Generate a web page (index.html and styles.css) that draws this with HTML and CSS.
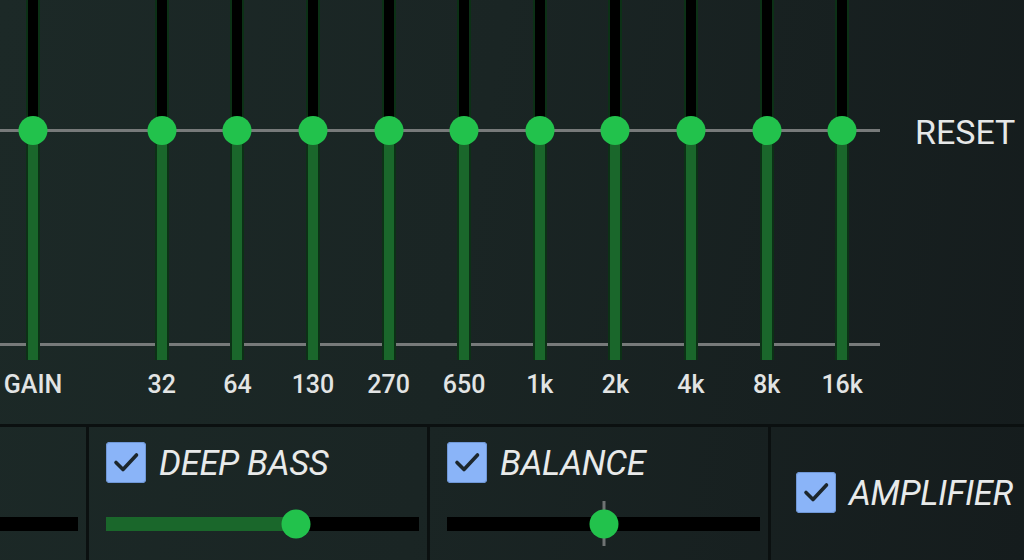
FILE: index.html
```html
<!DOCTYPE html>
<html lang="en">
<head>
    <meta charset="UTF-8">
    <meta name="viewport" content="width=device-width, initial-scale=1.0">
    <title>Equalizer</title>
    <link rel="stylesheet" href="styles.css">
</head>
<body>
    <div class="app">
        <section class="eq">
            <div class="bands">
                <div class="band gain">
                    <div class="track"><span class="knob"></span></div>
                    <span class="freq">GAIN</span>
                </div>
                <div class="band">
                    <div class="track"><span class="knob"></span></div>
                    <span class="freq">32</span>
                </div>
                <div class="band">
                    <div class="track"><span class="knob"></span></div>
                    <span class="freq">64</span>
                </div>
                <div class="band">
                    <div class="track"><span class="knob"></span></div>
                    <span class="freq">130</span>
                </div>
                <div class="band">
                    <div class="track"><span class="knob"></span></div>
                    <span class="freq">270</span>
                </div>
                <div class="band">
                    <div class="track"><span class="knob"></span></div>
                    <span class="freq">650</span>
                </div>
                <div class="band">
                    <div class="track"><span class="knob"></span></div>
                    <span class="freq">1k</span>
                </div>
                <div class="band">
                    <div class="track"><span class="knob"></span></div>
                    <span class="freq">2k</span>
                </div>
                <div class="band">
                    <div class="track"><span class="knob"></span></div>
                    <span class="freq">4k</span>
                </div>
                <div class="band">
                    <div class="track"><span class="knob"></span></div>
                    <span class="freq">8k</span>
                </div>
                <div class="band">
                    <div class="track"><span class="knob"></span></div>
                    <span class="freq">16k</span>
                </div>
            </div>
            <div class="side">
                <button class="reset" type="button">RESET</button>
            </div>
        </section>

        <section class="effects">
            <div class="panel cut">
                <div class="slider"></div>
            </div>

            <div class="panel">
                <label class="toggle">
                    <span class="check">
                        <svg viewBox="0 0 40 40"><polyline points="10,20.5 17,27.5 30.5,13"/></svg>
                    </span>
                    <span class="title">DEEP BASS</span>
                </label>
                <div class="slider">
                    <div class="fill" style="width: 60.6%"></div>
                    <span class="knob" style="left: 60.6%"></span>
                </div>
            </div>

            <div class="panel">
                <label class="toggle">
                    <span class="check">
                        <svg viewBox="0 0 40 40"><polyline points="10,20.5 17,27.5 30.5,13"/></svg>
                    </span>
                    <span class="title">BALANCE</span>
                </label>
                <div class="slider centered">
                    <span class="tick"></span>
                    <span class="knob" style="left: 50%"></span>
                </div>
            </div>

            <div class="panel solo">
                <label class="toggle">
                    <span class="check">
                        <svg viewBox="0 0 40 40"><polyline points="10,20.5 17,27.5 30.5,13"/></svg>
                    </span>
                    <span class="title">AMPLIFIER</span>
                </label>
            </div>
        </section>
    </div>
</body>
</html>
```

FILE: styles.css
```css
* {
    box-sizing: border-box;
}

body {
    margin: 0;
    font-family: Roboto, 'Noto Sans', sans-serif;
    color: #e4e6e6;
    background: #161d1e;
    overflow: hidden;
}

.app {
    width: 1024px;
    height: 560px;
    display: flex;
    flex-direction: column;
    background: linear-gradient(100deg, #1c2927 0%, #1a2524 45%, #151c1d 100%);
}

/* equalizer */
.eq {
    height: 424px;
    display: flex;
}

.bands {
    width: 880px;
    display: flex;
    background:
        linear-gradient(#777a7a, #777a7a) 0 129px / 100% 3px no-repeat,
        linear-gradient(#777a7a, #777a7a) 0 343px / 100% 3px no-repeat;
}

.band {
    width: 75.6px;
    display: flex;
    flex-direction: column;
    align-items: center;
}

.band.gain {
    width: 66px;
    margin-right: 58px;
}

.track {
    position: relative;
    width: 14px;
    height: 360px;
    background: linear-gradient(#000 0, #000 130px, #1a672b 130px);
    box-shadow: inset 2px 0 0 #0c3116, inset -2px 0 0 #0c3116;
}

.knob {
    position: absolute;
    width: 29px;
    height: 29px;
    border-radius: 50%;
    background: #22c24c;
}

.track .knob {
    top: 116px;
    left: 50%;
    transform: translateX(-50%);
}

.freq {
    margin-top: 10px;
    font-size: 25px;
    line-height: 30px;
    font-weight: 500;
    color: #e2e4e4;
}

.side {
    flex: 1;
    padding: 111px 0 0 35px;
}

.reset {
    background: none;
    border: none;
    padding: 0;
    font-family: Roboto, sans-serif;
    font-size: 34px;
    line-height: 42px;
    color: #e6e8e8;
}

/* effects */
.effects {
    flex: 1;
    display: flex;
    border-top: 3px solid #0b1010;
}

.panel {
    width: 341px;
    padding: 15px 8px 0 17px;
    border-left: 3px solid #0b1010;
}

.panel.cut {
    width: 86px;
    padding: 90px 8px 0 0;
    border-left: none;
}

.panel.solo {
    flex: 1;
    display: flex;
    align-items: center;
    padding: 0 0 2px 25px;
}

.toggle {
    display: flex;
    align-items: center;
    gap: 13px;
    height: 41px;
}

.check {
    width: 40px;
    height: 41px;
    border-radius: 4px;
    background: #8ab4f8;
    box-shadow: inset 0 0 0 1px #6f97d6;
}

.check svg {
    display: block;
    width: 40px;
    height: 40px;
}

.check polyline {
    fill: none;
    stroke: #1c262c;
    stroke-width: 3.6;
    stroke-linecap: round;
    stroke-linejoin: round;
}

.title {
    font-size: 34.5px;
    font-style: italic;
    color: #e8eaea;
    letter-spacing: -0.3px;
}

.slider {
    position: relative;
    height: 14px;
    margin-top: 34px;
    background: #000;
}

.panel.cut .slider {
    margin-top: 0;
}

.fill {
    height: 100%;
    background: #1a672b;
}

.slider .knob {
    top: 50%;
    transform: translate(-50%, -50%);
}

.tick {
    position: absolute;
    left: 50%;
    top: -16px;
    width: 3px;
    height: 45px;
    transform: translateX(-50%);
    background: #6f7373;
}
```
